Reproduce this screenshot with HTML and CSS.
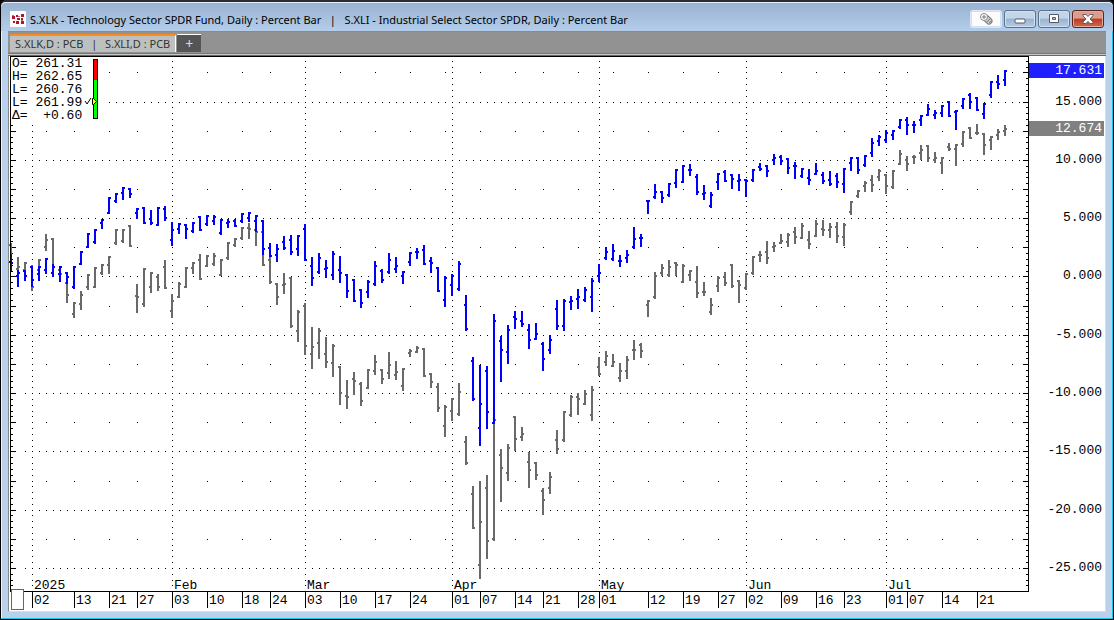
FILE: index.html
```html
<!DOCTYPE html>
<html lang="en">
<head>
  <meta charset="UTF-8">
  <title>S.XLK - Technology Sector SPDR Fund</title>
  <link rel="stylesheet" href="styles.css">
</head>
<body>
  <div class="window">
    <header class="titlebar">
      <svg class="logo" width="16" height="16" viewBox="0 0 16 16">
        <rect width="16" height="16" rx="1" fill="#fff"/>
        <path d="M2 5h3v3H2zM6 4h2v2H6zM7 7h3v2H7zM11 3h3v3h-3zM3 10h2v2H3zM6 10h3v3H6zM11 7h2v2h-2zM11 10h3v3h-3z" fill="#b5122b"/>
        <path d="M2 4h2v1H2zM8 5h2v1H8zM11 9h2v1h-2z" fill="#d66a78"/>
      </svg>
      <h1>S.XLK - Technology Sector SPDR Fund, Daily : Percent Bar &nbsp; | &nbsp; S.XLI - Industrial Select Sector SPDR, Daily : Percent Bar</h1>
      <div class="controls">
        <button class="link" aria-label="Link window">
          <svg width="14" height="14" viewBox="0 0 14 14" fill="none">
            <path d="M8 7l2 2" stroke="#777" stroke-width="7" stroke-linecap="round"/>
            <path d="M8 7l2 2" stroke="#ccc" stroke-width="5" stroke-linecap="round"/>
            <circle cx="5" cy="5" r="3.500" fill="#fff" stroke="#888"/>
            <path d="M3 5h4M5 3v4M8 10l3-3M10 11l2-2" stroke="#777"/>
          </svg>
        </button>
        <button aria-label="Minimize">
          <svg width="12" height="12" viewBox="0 0 12 12"><rect x="1" y="6" width="10" height="4" rx="1" fill="#fff" stroke="#555b68"/></svg>
        </button>
        <button aria-label="Maximize">
          <svg width="12" height="12" viewBox="0 0 12 12"><path d="M1.500 1.500h9v8h-9zM4.500 4.500v2h3v-2z" fill="#fff" fill-rule="evenodd" stroke="#555b68"/></svg>
        </button>
        <button class="close" aria-label="Close">
          <svg width="12" height="12" viewBox="0 0 12 12">
            <path d="M1 1.500h3l2 2 2-2h3v1L8 6l3 3v1.500H8l-2-2-2 2H1V9l3-3-3-3z" fill="#fff" stroke="#555b68"/>
          </svg>
        </button>
      </div>
    </header>

    <nav class="tabs">
      <button class="tab">S.XLK,D : PCB &nbsp;<span>|</span>&nbsp; S.XLI,D : PCB</button>
      <button class="add" aria-label="Add tab">+</button>
    </nav>

    <main class="chart">
      <svg id="plot" class="plot"></svg>
      <svg id="axis" class="axis"></svg>
      <div class="legend">
<pre>O= 261.31
H= 262.65
L= 260.76
L= 261.99
Δ=  +0.60</pre>
        <svg width="16" height="62" viewBox="0 0 16 62">
          <rect x="9" y="1" width="5" height="60"/>
          <rect x="10" y="2" width="3" height="20" fill="#f00"/>
          <rect x="10" y="22" width="3" height="38" fill="#0f0"/>
          <path d="M1 43l2 3 4-6" fill="none" stroke="#000"/>
          <path d="M8.500 40.500v6h1l3-3-3-3z" fill="#ff0" stroke="#000"/>
        </svg>
      </div>
    </main>
  </div>
  <script src="chart.js"></script>
</body>
</html>
```
FILE: styles.css
```css
* {
  box-sizing: border-box;
}
body {
  margin: 0;
  background: #000;
  font-family: "Noto Sans", sans-serif;
}
.window {
  display: flex;
  flex-direction: column;
  min-height: 100vh;
  padding: 0 7px 7px 7px;
  background: #b9d1ea;
  border: 1px solid #000;
  border-top: 2px solid #2c2b33;
  border-radius: 6px 6px 0 0;
  box-shadow: inset -1px -1px 0 #19c8e6, inset 1px 1px 0 #eef5fc;
}

/* title bar */
.titlebar {
  display: flex;
  align-items: center;
  height: 29px;
  margin: 0 -7px;
  padding: 4px 9px 0 9px;
  background: linear-gradient(#98b2d0, #b4cdea);
  border-top: 1px solid #e4eefa;
  border-radius: 5px 5px 0 0;
}
.logo {
  flex: none;
}
.titlebar h1 {
  flex: 1;
  margin: 2px 0 0 4px;
  overflow: hidden;
  font-size: 11px;
  font-weight: normal;
  line-height: 18px;
  white-space: nowrap;
  color: #000;
}
.controls {
  display: flex;
  gap: 2px;
}
.controls button {
  display: flex;
  align-items: center;
  justify-content: center;
  width: 32px;
  height: 18px;
  padding: 0;
  background: linear-gradient(#c3d5e8 45%, #98b4d2 50%, #b4cde6);
  border: 1px solid #5c738f;
  border-radius: 3px;
  box-shadow: inset 0 0 0 1px #d2e0ef;
}
.controls .link {
  background: #fcfcfc;
  border-color: #dde6f0;
}
.controls .close {
  background: linear-gradient(#dc9c8e 45%, #bd3a22 50%, #cf6a4f);
  border-color: #5a2220;
  box-shadow: inset 0 0 0 1px #e3aca0;
}

/* tabs */
.tabs {
  display: flex;
  align-items: flex-end;
  height: 25px;
  padding: 0 0 3px 2px;
  background: #929292;
  border-top: 1px solid #868b92;
  border-bottom: 1px solid #666;
  box-shadow: inset 0 -1px 0 #c8c8c8, inset 0 -2px 0 #777;
}
.tabs button {
  height: 18px;
  padding: 0 5px;
  border: 0;
  font-family: "Noto Sans", sans-serif;
  font-size: 11px;
  line-height: 14px;
  white-space: pre;
}
.tabs .tab {
  color: #333;
  background: #bcc1c0;
  border-top: 2px solid #ff8c1a;
  border-right: 1px solid #fff;
  border-radius: 2px 2px 0 0;
}
.tabs .tab span {
  margin: 0 2px;
}
.tabs .add {
  width: 24px;
  margin-left: 1px;
  color: #ddd;
  background: #555;
  border-top: 1px solid #fff;
  font-size: 14px;
}

/* chart */
.chart {
  position: relative;
  display: flex;
  flex: 1;
  background: #fff;
  border-left: 1px solid #888;
  border-right: 1px solid #ddd;
  border-bottom: 1px solid #ddd;
}
.plot {
  flex: 1;
  min-width: 0;
  height: 555px;
}
.axis {
  width: 76px;
  height: 555px;
}
.chart text,
.legend pre {
  font-family: "Liberation Mono", monospace;
  font-size: 13px;
}
.legend {
  position: absolute;
  top: 1px;
  left: 2px;
  display: flex;
  gap: 2px;
  padding: 0 4px 3px 1px;
  background: #fff;
}
.legend svg {
  margin-top: 1px;
}
.legend pre {
  margin: 0;
  line-height: 13px;
}
.axis .tag {
  fill: #fff;
}
```
FILE: chart.js
```js
// Each bar: XLK high, low, open, close, then XLI high, low, open, close.
// Values are thirds of a pixel below the top of the segment.
const segments = [
  { top: 114, bars: [
    [252,303,276,279, 218,290,225,280], [300,350,317,310, 262,320,298,290],
    [300,332,303,318, 277,320,300,280], [288,350,290,330, 285,362,290,350],
    [288,332,312,290, 267,300,300,269], [264,311,300,267, 192,242,230,209],
    [282,320,310,292, 204,300,207,290], [288,335,312,291, 290,322,300,312],
    [306,342,309,322, 310,398,340,374], [288,356,351,291, 396,443,431,398],
    [243,284,281,247, 363,419,403,374], [189,233,231,193, 312,359,350,314],
    [177,221,216,180, 291,353,350,294], [147,176,158,150, 282,315,308,285],
    [81,131,129,84, 259,311,284,261], [69,98,93,73, 177,224,220,180],
    [51,89,69,54, 177,218,214,180], [54,83,57,72, 165,230,169,227],
    [114,146,129,117, 342,429,377,380], [111,161,114,158, 294,410,401,297],
    [120,164,147,158, 306,368,350,310], [111,167,164,114, 312,362,320,350],
    [108,152,118,144, 270,356,291,353]
  ] },
  { top: 134, bars: [
    [96,167,150,120, 312,383,363,332], [99,131,117,102, 276,323,321,282],
    [102,146,105,117, 231,293,290,234], [96,128,123,100, 216,251,233,219],
    [78,122,82,119, 192,269,210,266], [75,107,102,78, 195,230,228,198],
    [75,104,93,80, 189,227,222,198], [87,136,128,90, 207,258,255,210],
    [87,113,99,97, 156,209,204,159], [87,112,92,107, 144,170,164,147],
    [69,98,93,72, 111,149,143,115], [66,95,83,70, 99,146,115,117],
    [75,125,93,78, 78,167,120,125], [90,194,93,177, 123,227,126,224],
    [159,202,173,198, 200,281,210,277], [162,215,195,178, 279,344,282,321],
    [138,179,155,175, 249,311,285,282], [135,194,150,186, 261,413,264,408],
    [135,197,178,138, 360,455,423,366], [102,212,117,210, 339,494,348,468],
    [201,287,228,264, 411,536,492,471], [189,251,246,204, 414,506,459,423],
    [210,263,238,234, 441,533,492,516]
  ] },
  { top: 174, bars: [
    [63,149,135,72, 342,440,399,348], [78,158,120,128, 408,524,411,489],
    [132,203,135,183, 450,536,498,501], [147,215,150,212, 426,494,447,453],
    [177,233,180,219, 456,527,461,514], [150,203,186,155, 417,476,474,420],
    [93,167,162,108, 375,434,423,396], [117,158,123,150, 417,461,420,446],
    [69,131,127,90, 366,446,429,405], [81,128,117,108, 393,449,435,426],
    [123,161,138,126, 414,482,467,417], [66,107,96,70, 357,380,370,363],
    [54,87,66,66, 348,368,366,353], [45,104,60,101, 354,440,357,437],
    [81,128,92,99, 429,473,433,456], [111,185,115,183, 459,545,470,534],
    [138,230,210,144, 525,620,588,531], [132,197,165,137, 504,572,543,507],
    [93,182,178,102, 459,557,552,486]
  ] },
  { top: 194, bars: [
    [135,242,165,237, 558,644,576,638], [321,452,332,447, 708,836,732,833],
    [345,587,534,462, 693,986,944,815], [348,536,363,486, 675,926,713,872],
    [192,521,518,212, 500,872,867,509], [258,395,272,299, 597,755,614,654],
    [225,341,306,240, 582,692,669,594], [183,236,201,207, 498,603,501,567],
    [183,230,213,221, 531,572,560,552], [222,296,240,269, 606,713,636,660],
    [219,269,267,251, 636,689,639,675], [276,362,281,327, 714,794,722,749],
    [255,311,300,270, 666,731,713,681], [150,239,177,228, 540,611,570,597],
    [147,242,228,153, 483,575,570,486], [138,179,155,153, 435,500,495,440],
    [117,176,147,141, 429,494,440,446], [111,155,150,120, 420,464,461,432],
    [84,185,141,93, 408,512,494,419]
  ] },
  { top: 94, bars: [
    [342,395,377,369, 621,678,650,672], [291,329,324,306, 603,647,635,617],
    [282,332,327,302, 612,650,647,635], [315,350,332,333, 639,695,684,662],
    [300,338,324,315, 618,686,662,629], [231,296,290,267, 570,629,600,600],
    [252,290,263,264, 579,623,584,603], [150,191,153,153, 450,500,465,453],
    [102,146,141,126, 366,446,441,377], [123,158,127,144, 342,377,368,354],
    [99,140,135,102, 330,380,375,350], [57,113,98,60, 336,377,339,345],
    [45,98,95,48, 342,398,396,347], [42,77,60,60, 360,392,374,363],
    [72,134,81,126, 348,443,396,429], [105,149,132,128, 396,437,426,426],
    [126,173,168,135, 444,494,486,465], [69,119,96,72, 378,425,408,383],
    [60,96,66,93, 366,407,380,398], [72,116,75,86, 342,413,345,408],
    [72,122,93,90, 390,458,393,404]
  ] },
  { top: 74, bars: [
    [147,200,150,152, 429,479,474,432], [117,155,150,120, 378,434,429,381],
    [99,122,110,117, 363,395,374,374], [105,140,108,123, 333,401,366,383],
    [72,104,89,83, 336,365,350,348], [75,104,82,93, 312,341,339,333],
    [84,131,87,113, 309,350,336,315], [96,146,108,108, 291,341,305,320],
    [114,143,138,117, 279,326,323,288], [117,164,144,150, 303,356,330,341],
    [99,134,131,123, 270,320,318,281], [126,161,135,153, 270,317,297,300],
    [123,167,150,162, 279,323,300,290], [129,173,138,156, 276,338,291,318],
    [114,188,162,117, 279,347,320,284], [81,122,99,85, 213,254,245,216],
    [81,131,84,120, 180,203,197,184], [75,112,104,78, 153,185,167,158],
    [24,80,69,39, 135,185,150,165], [15,47,32,20, 117,152,140,123]
  ] },
  { top: -6, bars: [
    [240,278,270,249, 372,431,375,408], [240,269,254,243, 360,416,411,363],
    [207,236,231,210, 300,344,342,312], [201,254,210,224, 318,362,329,341],
    [213,248,225,225, 315,341,321,321], [195,227,210,198, 285,329,309,300],
    [162,197,194,178, 285,335,288,323], [180,206,195,190, 306,338,330,324],
    [165,200,188,168, 321,371,338,324], [153,200,156,198, 279,302,290,297],
    [180,239,185,183, 282,347,296,285], [144,176,168,147, 243,290,282,246],
    [129,176,134,155, 231,266,234,263], [141,182,144,180, 222,254,249,249],
    [158,206,192,162, 249,314,252,284], [93,143,134,96, 258,299,270,261],
    [75,116,97,102, 237,269,255,246], [60,107,90,63, 225,257,242,236]
  ] }
];

// bar number of each date label
const months = [[3, '2025'], [23, 'Feb'], [42, 'Mar'], [63, 'Apr'], [84, 'May'], [105, 'Jun'], [125, 'Jul']];
const days = [
  [3, '02'], [9, '13'], [14, '21'], [18, '27'], [23, '03'], [28, '10'], [33, '18'], [37, '24'],
  [42, '03'], [47, '10'], [52, '17'], [57, '24'], [63, '01'], [67, '07'], [72, '14'], [76, '21'],
  [81, '28'], [84, '01'], [91, '12'], [96, '19'], [101, '27'], [105, '02'], [110, '09'],
  [115, '16'], [119, '23'], [125, '01'], [128, '07'], [133, '14'], [138, '21']
];
const weeks = [5, 9, 14, 18, 28, 33, 37, 47, 52, 57, 62, 67, 72, 76, 81, 86, 91, 96, 101, 110, 115, 119, 124, 128, 133, 138, 143];

const bottom = 535;
const zero = 220.45;
const perPercent = 58.3 / 5;

const xOf = bar => 1 + bar * 7;
const yOf = percent => Math.round(zero - percent * perPercent);
const rect = (x, y, w, h, fill = '#000') =>
  `<rect x="${x}" y="${y}" width="${w}" height="${h}" fill="${fill}"/>`;
const text = (x, y, value, extra = '') => `<text x="${x}" y="${y}" ${extra}>${value}</text>`;

function drawBar(x, top, [high, low, open, close], color) {
  const y = v => top + Math.round(v / 3);
  return rect(x, y(high), 2, y(low) - y(high), color) +
    rect(x - 1, y(open) - 1, 1, 2, color) +
    rect(x + 2, y(close) - 1, 1, 2, color);
}

function drawPlot() {
  const svg = document.getElementById('plot');
  const right = svg.clientWidth - 1;
  let out = '';

  // grid
  for (let p = -25; p <= 15; p += 5) {
    for (let x = xOf(2) + 1; x < right - 5; x += 7) out += rect(x, yOf(p), 1, 1);
  }
  for (let p = -22.5; p <= 17.5; p += 5) {
    weeks.forEach(w => out += rect(xOf(w) + 1, yOf(p), 1, 1));
  }
  for (let p = -27; p <= 18.5; p += 0.5) {
    months.forEach(m => out += rect(xOf(m[0]) + 1, yOf(p), 1, 1));
    const size = p % 2.5 === 0 ? 5 : 2;
    out += rect(2, yOf(p), size, 1) + rect(right - size, yOf(p), size, 1);
  }

  // price bars, XLI under XLK
  let grey = '';
  let blue = '';
  let bar = 0;
  segments.forEach(({ top, bars }) => bars.forEach(b => {
    grey += drawBar(xOf(bar), top, b.slice(4), '#696969');
    blue += drawBar(xOf(bar), top, b.slice(0, 4), '#0000ff');
    bar++;
  }));
  out += grey + blue;

  // frame and dates
  out += rect(1, 0, right, 1) + rect(1, 0, 1, bottom) + rect(right, 0, 1, bottom + 1) + rect(1, bottom, right, 1);
  days.forEach(([n, label]) => {
    out += rect(xOf(n) + 1, bottom, 1, 17) + text(xOf(n) + 3, 548, label);
  });
  months.forEach(([n, label]) => out += text(xOf(n) + 3, 533, label));
  out += '<rect x="2.5" y="533.5" width="12" height="20" fill="#fff" stroke="#666"/>';
  svg.innerHTML = out;
}

function drawAxis() {
  let out = '';
  for (let p = -25; p <= 15; p += 5) {
    out += text(73, yOf(p) + 3, p.toFixed(3), 'text-anchor="end"');
  }
  out += rect(0, 7, 75, 15, '#2020ff') + text(73, 18, '17.631', 'class="tag" text-anchor="end"');
  out += rect(0, 65, 75, 15, '#808080') + text(73, 76, '12.674', 'class="tag" text-anchor="end"');
  document.getElementById('axis').innerHTML = out;
}

drawPlot();
drawAxis();
window.addEventListener('resize', drawPlot);
```
